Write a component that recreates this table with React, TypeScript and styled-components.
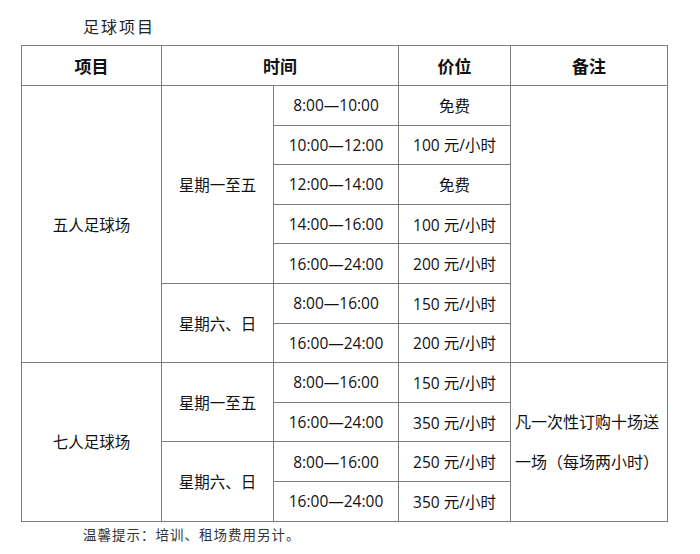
import styled, { createGlobalStyle } from 'styled-components';

const GlobalStyles = createGlobalStyle`
  * {
    box-sizing: border-box;
  }

  body {
    margin: 0;
    background: #ffffff;
    color: #111111;
    font-family: 'Open Sans', 'Noto Sans CJK SC', sans-serif;
  }
`;

const Page = styled.main`
  width: 700px;
  height: 554px;
  padding: 15px 0 0 21px;
  display: flex;
  flex-direction: column;
`;

const Title = styled.h1`
  margin: 0 0 8px 62px;
  height: 22px;
  font-family: 'Noto Sans CJK SC', serif;
  font-weight: 400;
  font-size: 16px;
  line-height: 22px;
  letter-spacing: 2px;
  color: #222222;
`;

const Table = styled.table`
  width: 646px;
  border-collapse: collapse;
  table-layout: fixed;
`;

const Col = styled.col<{ $w: number }>`
  width: ${(p) => p.$w}px;
`;

const HeadCell = styled.th`
  height: 40px;
  border: 1px solid #7d7d7d;
  font-family: 'Noto Sans CJK SC', sans-serif;
  font-weight: 700;
  font-size: 17px;
  padding: 0;
  text-align: center;
`;

const Cell = styled.td`
  height: 39.6px;
  border: 1px solid #7d7d7d;
  padding: 0;
  font-size: 15.5px;
  text-align: center;
  vertical-align: middle;
`;

const NoteCell = styled(Cell)`
  text-align: left;
  padding-left: 4px;
  font-size: 16px;
  line-height: 40px;
`;

const Footer = styled.p`
  margin: 1px 0 0 62px;
  font-family: 'Noto Sans CJK SC', serif;
  font-weight: 400;
  font-size: 13.5px;
  line-height: 22px;
  letter-spacing: 1px;
  color: #333333;
`;

type Group = { days: string; rows: [string, string][] };
type Venue = { name: string; groups: Group[]; note?: string[] };

const venues: Venue[] = [
  {
    name: '五人足球场',
    groups: [
      {
        days: '星期一至五',
        rows: [
          ['8:00—10:00', '免费'],
          ['10:00—12:00', '100 元/小时'],
          ['12:00—14:00', '免费'],
          ['14:00—16:00', '100 元/小时'],
          ['16:00—24:00', '200 元/小时'],
        ],
      },
      {
        days: '星期六、日',
        rows: [
          ['8:00—16:00', '150 元/小时'],
          ['16:00—24:00', '200 元/小时'],
        ],
      },
    ],
  },
  {
    name: '七人足球场',
    note: ['凡一次性订购十场送', '一场（每场两小时）'],
    groups: [
      {
        days: '星期一至五',
        rows: [
          ['8:00—16:00', '150 元/小时'],
          ['16:00—24:00', '350 元/小时'],
        ],
      },
      {
        days: '星期六、日',
        rows: [
          ['8:00—16:00', '250 元/小时'],
          ['16:00—24:00', '350 元/小时'],
        ],
      },
    ],
  },
];

export default function App() {
  return (
    <>
      <GlobalStyles />
      <Page>
        <Title>足球项目</Title>
        <Table>
          <colgroup>
            <Col $w={140} />
            <Col $w={112} />
            <Col $w={125} />
            <Col $w={112} />
            <Col $w={157} />
          </colgroup>
          <thead>
            <tr>
              <HeadCell>项目</HeadCell>
              <HeadCell colSpan={2}>时间</HeadCell>
              <HeadCell>价位</HeadCell>
              <HeadCell>备注</HeadCell>
            </tr>
          </thead>
          <tbody>
            {venues.map((venue) => {
              const total = venue.groups.reduce((n, g) => n + g.rows.length, 0);
              return venue.groups.map((group, gi) =>
                group.rows.map((row, ri) => (
                  <tr key={venue.name + gi + ri}>
                    {gi === 0 && ri === 0 && <Cell rowSpan={total}>{venue.name}</Cell>}
                    {ri === 0 && <Cell rowSpan={group.rows.length}>{group.days}</Cell>}
                    <Cell>{row[0]}</Cell>
                    <Cell>{row[1]}</Cell>
                    {gi === 0 && ri === 0 && (
                      <NoteCell rowSpan={total}>
                        {venue.note?.map((line) => (
                          <div key={line}>{line}</div>
                        ))}
                      </NoteCell>
                    )}
                  </tr>
                ))
              );
            })}
          </tbody>
        </Table>
        <Footer>温馨提示：培训、租场费用另计。</Footer>
      </Page>
    </>
  );
}
